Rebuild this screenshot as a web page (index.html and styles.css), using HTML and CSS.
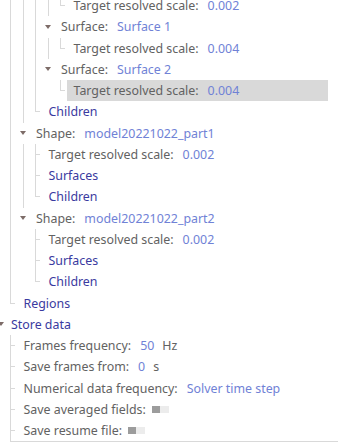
FILE: index.html
```html
<!DOCTYPE html>
<html>
<head>
<meta charset="utf-8">
<link rel="stylesheet" href="styles.css">
</head>
<body>
<div class="tree">
  <div class="row"><span class="u"></span><span class="u v"></span><span class="u v"></span><span class="u v"></span><span class="u v"></span><span class="sw end"></span><span class="title"><span class="lbl">Target resolved scale:</span><span class="val">0.002</span></span></div>
  <div class="row"><span class="u"></span><span class="u v"></span><span class="u v"></span><span class="u v"></span><span class="sw caret"></span><span class="title"><span class="lbl">Surface:</span><span class="val">Surface 1</span></span></div>
  <div class="row"><span class="u"></span><span class="u v"></span><span class="u v"></span><span class="u v"></span><span class="u v"></span><span class="sw end"></span><span class="title"><span class="lbl">Target resolved scale:</span><span class="val">0.004</span></span></div>
  <div class="row"><span class="u"></span><span class="u v"></span><span class="u v"></span><span class="u v"></span><span class="sw caret"></span><span class="title"><span class="lbl">Surface:</span><span class="val">Surface 2</span></span></div>
  <div class="row"><span class="u"></span><span class="u v"></span><span class="u v"></span><span class="u v"></span><span class="u"></span><span class="sw end"></span><span class="title selected"><span class="lbl">Target resolved scale:</span><span class="val">0.004</span></span></div>
  <div class="row"><span class="u"></span><span class="u v"></span><span class="u v"></span><span class="sw end"></span><span class="title"><span class="node">Children</span></span></div>
  <div class="row"><span class="u"></span><span class="u v"></span><span class="sw caret"></span><span class="title"><span class="lbl">Shape:</span><span class="val">model20221022_part1</span></span></div>
  <div class="row"><span class="u"></span><span class="u v"></span><span class="u v"></span><span class="sw mid"></span><span class="title"><span class="lbl">Target resolved scale:</span><span class="val">0.002</span></span></div>
  <div class="row"><span class="u"></span><span class="u v"></span><span class="u v"></span><span class="sw mid"></span><span class="title"><span class="node">Surfaces</span></span></div>
  <div class="row"><span class="u"></span><span class="u v"></span><span class="u v"></span><span class="sw end"></span><span class="title"><span class="node">Children</span></span></div>
  <div class="row"><span class="u"></span><span class="u v"></span><span class="sw caret"></span><span class="title"><span class="lbl">Shape:</span><span class="val">model20221022_part2</span></span></div>
  <div class="row"><span class="u"></span><span class="u v"></span><span class="u"></span><span class="sw mid"></span><span class="title"><span class="lbl">Target resolved scale:</span><span class="val">0.002</span></span></div>
  <div class="row"><span class="u"></span><span class="u v"></span><span class="u"></span><span class="sw mid"></span><span class="title"><span class="node">Surfaces</span></span></div>
  <div class="row"><span class="u"></span><span class="u v"></span><span class="u"></span><span class="sw end"></span><span class="title"><span class="node">Children</span></span></div>
  <div class="row"><span class="u"></span><span class="sw end"></span><span class="title"><span class="node">Regions</span></span></div>
  <div class="row"><span class="sw caret first"></span><span class="title"><span class="node">Store data</span></span></div>
  <div class="row"><span class="u"></span><span class="sw mid"></span><span class="title"><span class="lbl">Frames frequency:</span><span class="val">50</span><span class="unit">Hz</span></span></div>
  <div class="row"><span class="u"></span><span class="sw mid"></span><span class="title"><span class="lbl">Save frames from:</span><span class="val">0</span><span class="unit">s</span></span></div>
  <div class="row"><span class="u"></span><span class="sw mid"></span><span class="title"><span class="lbl">Numerical data frequency:</span><span class="val">Solver time step</span></span></div>
  <div class="row"><span class="u"></span><span class="sw mid"></span><span class="title"><span class="lbl">Save averaged fields:</span><span class="toggle"><span class="knob"></span></span></span></div>
  <div class="row"><span class="u"></span><span class="sw mid"></span><span class="title"><span class="lbl">Save resume file:</span><span class="toggle"><span class="knob"></span></span></span></div>
  <div class="rule"></div>
</div>
</body>
</html>
```
FILE: styles.css
```css
html, body {
  margin: 0;
  padding: 0;
  background: #ffffff;
  overflow: hidden;
}
body {
  font-family: "Noto Sans", "Open Sans", sans-serif;
  font-size: 12.4px;
  color: #626262;
}
.tree {
  margin: -5px 10px 0 -8.5px;
}
.row {
  display: flex;
  height: 21.25px;
  align-items: stretch;
}
.u, .sw {
  flex: none;
  width: 12.5px;
}
.u.v {
  background: linear-gradient(#d9d9d9, #d9d9d9) no-repeat 6px 0 / 1px 100%;
}
.sw.mid {
  background:
    linear-gradient(#d9d9d9, #d9d9d9) no-repeat 6px 0 / 1px 100%,
    linear-gradient(#d9d9d9, #d9d9d9) no-repeat 6px 50% / 5px 1px;
}
.sw.end {
  background:
    linear-gradient(#d9d9d9, #d9d9d9) no-repeat 6px 0 / 1px 50%,
    linear-gradient(#d9d9d9, #d9d9d9) no-repeat 6px 50% / 5px 1px;
}
.sw.caret {
  display: flex;
  align-items: center;
  justify-content: center;
}
.sw.caret::after {
  content: "";
  width: 0;
  height: 0;
  border-left: 3px solid transparent;
  border-right: 3px solid transparent;
  border-top: 4px solid #7d6c68;
}
.sw.caret.first {
  justify-content: flex-end;
}
.title {
  flex: 1;
  display: flex;
  align-items: center;
  padding-left: 7px;
  white-space: nowrap;
  line-height: 21.25px;
}
.title.selected {
  background: #d9d9d9;
}
.lbl {
  color: #626262;
}
.val {
  color: #7082d6;
  margin-left: 9px;
}
.unit {
  color: #626262;
  margin-left: 8px;
}
.node {
  color: #3a3aa0;
}
.toggle {
  display: flex;
  margin-left: 6px;
  width: 17px;
  height: 7px;
  background: #ececec;
}
.knob {
  width: 8px;
  height: 7px;
  background: #9c9c9c;
}
.rule {
  margin: 0 -10px 0 18.5px;
  border-top: 1px solid #d9d9d9;
}
```
